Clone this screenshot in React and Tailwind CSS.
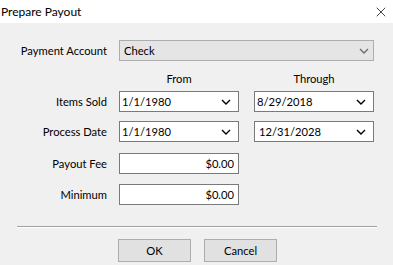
import { X } from "lucide-react";

const font = { fontFamily: 'Lato, "Noto Sans", sans-serif' };

function Chevron({ className }) {
  return (
    <svg width="10" height="6" viewBox="0 0 10 6" className={className}>
      <path d="M1 1 L5 5 L9 1" fill="none" stroke="currentColor" strokeWidth="1.4" />
    </svg>
  );
}

function DateBox({ value, pad = "pl-[2px]" }) {
  return (
    <div className={`h-[21px] w-[120px] bg-white border border-[#7a7a7a] flex items-center justify-between ${pad} pr-[7px]`}>
      <span>{value}</span>
      <Chevron className="text-black" />
    </div>
  );
}

function MoneyBox({ value }) {
  return (
    <div className="h-[21px] w-[120px] bg-white border border-[#7a7a7a] flex items-center justify-end pr-[4px]">
      {value}
    </div>
  );
}

function Row({ label, children, className = "" }) {
  return (
    <div className={`flex items-center ${className}`}>
      <div className="w-[108px] text-right pr-[1px]">{label}</div>
      <div className="ml-[11px] flex gap-[15px]">{children}</div>
    </div>
  );
}

export default function App() {
  return (
    <div className="w-[393px] h-[265px] bg-[#f0f0f0] text-[11.2px] text-black leading-none overflow-hidden" style={font}>
      <div className="h-[23px] bg-white flex items-center justify-between pl-[1px] pr-[4px]">
        <span className="text-[12px]">Prepare Payout</span>
        <X size={16} strokeWidth={1.1} />
      </div>

      <Row label="Payment Account" className="mt-[17px]">
        <div className="h-[21px] w-[255px] bg-[#e5e5e5] border border-[#adadad] flex items-center justify-between pl-[4px] pr-[4px]">
          <span>Check</span>
          <Chevron className="text-[#6d6d6d]" />
        </div>
      </Row>

      <div className="flex mt-[12px] h-[12px] items-center">
        <div className="w-[119px]" />
        <div className="w-[120px] text-center">From</div>
        <div className="w-[15px]" />
        <div className="w-[120px] text-center">Through</div>
      </div>

      <Row label="Items Sold" className="mt-[6px]">
        <DateBox value="1/1/1980" />
        <DateBox value="8/29/2018" />
      </Row>

      <Row label="Process Date" className="mt-[9px]">
        <DateBox value="1/1/1980" />
        <DateBox value="12/31/2028" pad="pl-[4px]" />
      </Row>

      <Row label="Payout Fee" className="mt-[11px]">
        <MoneyBox value="$0.00" />
      </Row>

      <Row label="Minimum" className="mt-[10px]">
        <MoneyBox value="$0.00" />
      </Row>

      <div className="ml-[17px] w-[360px] mt-[21px] border-t border-[#a0a0a0] border-b border-b-white" />

      <div className="flex gap-[13px] ml-[118px] mt-[11px]">
        <button className="h-[23px] w-[73px] bg-[#e1e1e1] border border-[#adadad]">OK</button>
        <button className="h-[23px] w-[73px] bg-[#e1e1e1] border border-[#adadad]">Cancel</button>
      </div>
    </div>
  );
}
